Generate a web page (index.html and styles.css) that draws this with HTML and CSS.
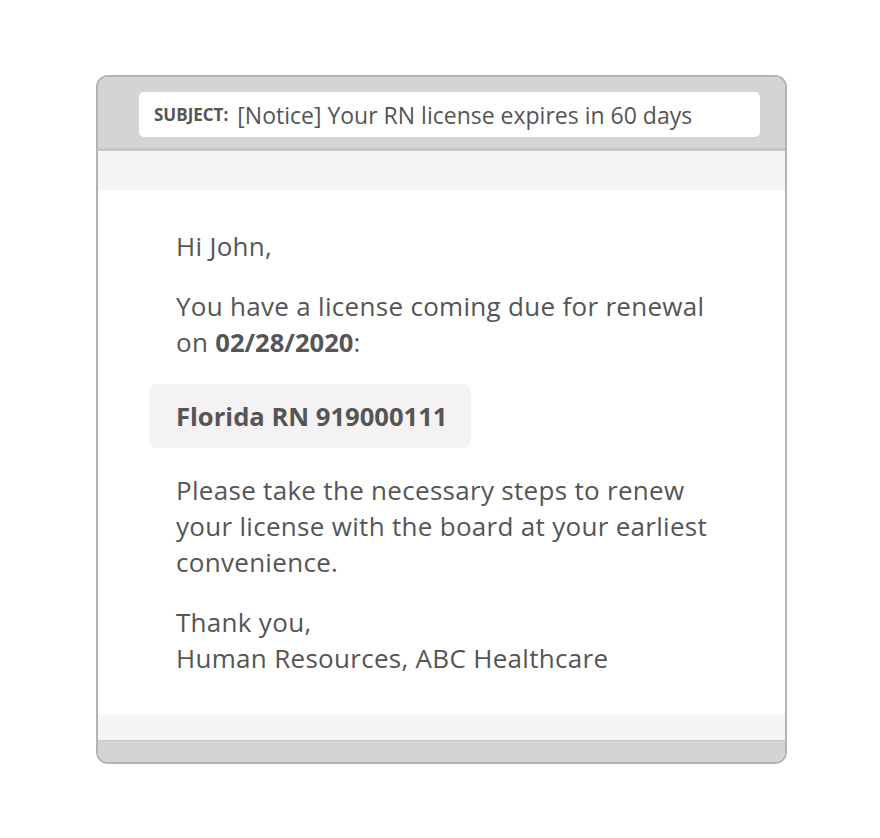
FILE: index.html
```html
<!DOCTYPE html>
<html>
<head>
<meta charset="utf-8">
<link rel="stylesheet" href="styles.css">
</head>
<body>
<div class="page">
  <div class="mail">
    <div class="header">
      <div class="subject"><span class="label">SUBJECT:</span><span class="subj-text">[Notice] Your RN license expires in 60 days</span></div>
    </div>
    <div class="strip top"></div>
    <div class="body">
      <p>Hi John,</p>
      <p>You have a license coming due for renewal<br>on <b>02/28/2020</b>:</p>
      <div class="license">Florida RN 919000111</div>
      <p>Please take the necessary steps to renew<br>your license with the board at your earliest<br>convenience.</p>
      <p>Thank you,<br>Human Resources, ABC Healthcare</p>
    </div>
    <div class="strip bottom"></div>
    <div class="footer"></div>
  </div>
</div>
</body>
</html>
```

FILE: styles.css
```css
* { box-sizing: border-box; }
html, body { margin: 0; padding: 0; background: #fff; }
body { font-family: "Open Sans", "DejaVu Sans", sans-serif; color: #555555; }
.page { padding: 75px 0 0 96px; }
.mail {
  width: 691px;
  border: 2px solid #b3b3b3;
  border-radius: 12px;
  overflow: hidden;
  background: #fff;
}
.header {
  background: #d4d4d4;
  padding: 15px 25px 11px 41px;
  border-bottom: 3px solid #c6c6c6;
}
.subject {
  background: #fff;
  border-radius: 5px;
  height: 45px;
  display: flex;
  align-items: center;
  padding-left: 15px;
}
.label { font-weight: 700; font-size: 17px; color: #555; margin-right: 9px; }
.subj-text { font-size: 23px; color: #555; }
.strip { background: #f4f5f4; }
.strip.top { height: 39px; }
.strip.bottom { height: 26px; border-bottom: 1px solid #c8c8c8; }
.footer { height: 21px; background: #d4d4d4; }
.body { padding: 38px 30px 39px 78px; }
.body p { margin: 0 0 24px; font-size: 26px; line-height: 36px; letter-spacing: 0.3px; }
.body p b { letter-spacing: 0; font-size: 25.6px; line-height: 1; }
.body p:last-child { margin-bottom: 0; }
.license {
  margin: 0 0 24px -27px;
  width: 322px;
  height: 64px;
  background: #f4f2f3;
  border-radius: 8px;
  display: flex;
  align-items: center;
  padding-left: 27px;
  font-weight: 700;
  font-size: 25.6px;
}
```
